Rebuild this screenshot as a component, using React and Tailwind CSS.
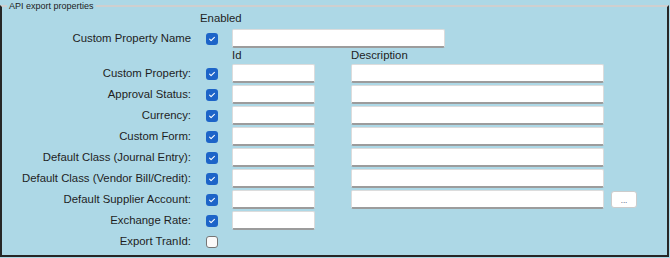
import React from 'react'

const ROWS = [
  { label: 'Custom Property:', id: true, desc: true },
  { label: 'Approval Status:', id: true, desc: true },
  { label: 'Currency:', id: true, desc: true },
  { label: 'Custom Form:', id: true, desc: true },
  { label: 'Default Class (Journal Entry):', id: true, desc: true },
  { label: 'Default Class (Vendor Bill/Credit):', id: true, desc: true },
  { label: 'Default Supplier Account:', id: true, desc: true, button: true },
  { label: 'Exchange Rate:', id: true },
  { label: 'Export TranId:', unchecked: true },
]

function Check({ checked = true }) {
  if (!checked) {
    return (
      <span className="block w-[12px] h-[12px] rounded-[3px] border border-[#767676] bg-[#fafafa]" />
    )
  }
  return (
    <span className="flex items-center justify-center w-[12px] h-[12px] rounded-[3px] bg-[#1d64c8]">
      <svg width="12" height="12" viewBox="0 0 12 12">
        <path d="M3.6 6.1 L5.1 7.6 L8.4 4.4" fill="none" stroke="#ffffff" strokeWidth="1.1" strokeLinecap="round" strokeLinejoin="round" />
      </svg>
    </span>
  )
}

function Field({ width }) {
  return (
    <input
      className={`${width} h-[19px] bg-white rounded-[2px] border border-[#dcdcdc] border-b-2 border-b-[#9c9c9c] outline-none`}
    />
  )
}

export default function App() {
  return (
    <div
      className="w-[670px] h-[258px] bg-[#add8e6] pt-[5px] pr-px pb-px text-[#1e1e1e] text-[11.35px] leading-none"
      style={{ fontFamily: '"Liberation Sans", Arial, sans-serif' }}
    >
      <div className="relative h-full border-2 border-t-[#cfcfcf] border-x-[#262626] border-b-[#262626] pt-[2px]">
        <span className="absolute left-[5px] top-[-6px] px-[2px] bg-[#add8e6] text-[9px] leading-[11px] text-[#222]">
          API export properties
        </span>

        <div className="h-[20px] flex items-center pl-[198px]">Enabled</div>

        <div className="h-[19px] flex items-center">
          <div className="w-[190px] pr-px text-right">Custom Property Name</div>
          <div className="w-[40px] flex justify-center">
            <Check />
          </div>
          <Field width="w-[213px]" />
        </div>

        <div className="h-[15px] flex items-center">
          <div className="w-[230px]" />
          <div className="w-[119px]">Id</div>
          <div>Description</div>
        </div>

        {ROWS.map((row) => (
          <div key={row.label} className="h-[21px] flex items-center">
            <div className="w-[190px] pr-px text-right">{row.label}</div>
            <div className="w-[40px] flex justify-center">
              <Check checked={!row.unchecked} />
            </div>
            <div className="w-[119px]">{row.id && <Field width="w-[83px]" />}</div>
            {row.desc && <Field width="w-[253px]" />}
            {row.button && (
              <button className="ml-[7px] w-[26px] h-[17px] bg-white rounded-[3px] border border-[#cccccc] text-[8px] leading-[8px] text-[#33336b] pt-[3px]">
                ...
              </button>
            )}
          </div>
        ))}
      </div>
    </div>
  )
}
